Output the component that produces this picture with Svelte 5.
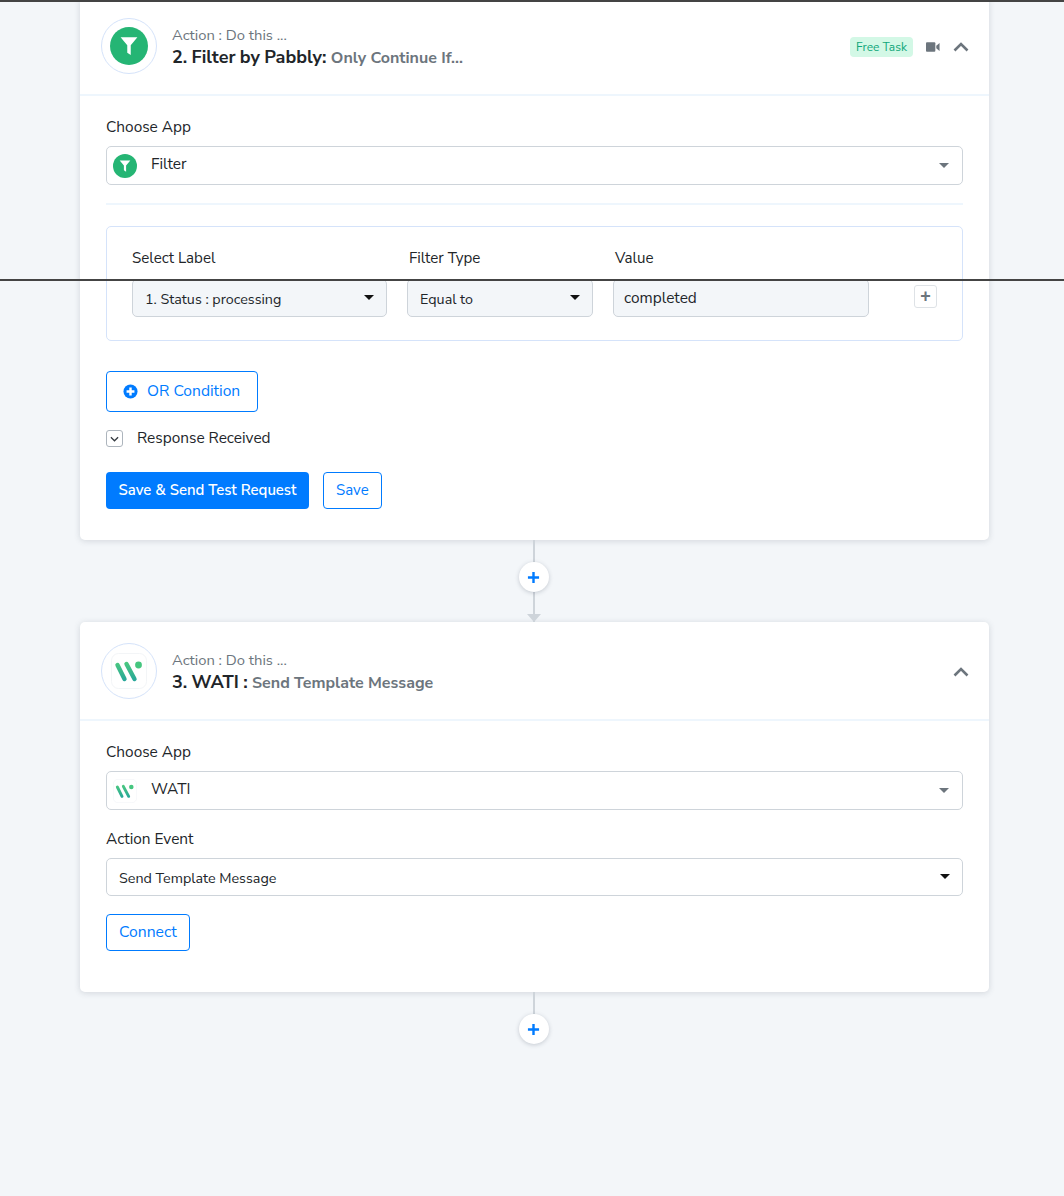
<script>
  const filterIcon = "M6.7 6.5h10.6l-4.2 5v6.2l-2.2-1.4v-4.8z";
</script>

<div class="page">
  <div class="rule top"></div>
  <div class="rule middle"></div>

  <section class="card">
    <header class="card-head">
      <div class="logo-ring">
        <svg class="logo" viewBox="0 0 24 24"><circle cx="12" cy="12" r="12" fill="#25b574" /><path d={filterIcon} fill="#fff" /></svg>
      </div>
      <div class="titles">
        <div class="kicker">Action : Do this ...</div>
        <div class="title">2. Filter by Pabbly: <span>Only Continue If...</span></div>
      </div>
      <span class="badge">Free Task</span>
      <svg class="video" viewBox="0 0 15 10"><rect x="0" y="0" width="10" height="10" rx="1" fill="#6c757d" /><path d="M11 3.6 14.5.8v8.4L11 6.4z" fill="#6c757d" /></svg>
      <svg class="chevron" viewBox="0 0 16 10"><path d="M1.5 8.5 8 2l6.5 6.5" fill="none" stroke="#6c757d" stroke-width="2.6" /></svg>
    </header>

    <div class="card-body">
      <div class="label">Choose App</div>
      <div class="app-select">
        <svg class="app-logo" viewBox="0 0 24 24"><circle cx="12" cy="12" r="12" fill="#25b574" /><path d={filterIcon} fill="#fff" /></svg>
        <span>Filter</span>
        <i class="caret grey"></i>
      </div>
      <hr />

      <div class="filter-box">
        <div class="filter-grid">
          <div class="label">Select Label</div>
          <div class="label inset">Filter Type</div>
          <div class="label inset">Value</div>
          <div></div>
          <div class="field small">1. Status : processing<i class="caret"></i></div>
          <div class="field small">Equal to<i class="caret"></i></div>
          <div class="field value">completed</div>
          <button class="plus">+</button>
        </div>
      </div>

      <button class="outline or">
        <svg viewBox="0 0 16 16"><circle cx="8" cy="8" r="7.5" fill="#007bff" /><path d="M8 3.8v8.4M3.8 8h8.4" stroke="#fff" stroke-width="2.6" /></svg>
        OR Condition
      </button>

      <div class="response">
        <span class="toggle"><svg viewBox="0 0 10 6"><path d="M1 1l4 4 4-4" fill="none" stroke="#343a40" stroke-width="1.4" /></svg></span>
        <span class="response-text">Response Received</span>
      </div>

      <div class="actions">
        <button class="solid">Save &amp; Send Test Request</button>
        <button class="outline small-btn">Save</button>
      </div>
    </div>
  </section>

  <div class="connector">
    <div class="add"><svg viewBox="0 0 14 14"><path d="M7 1v12M1 7h12" stroke="#007bff" stroke-width="2.6" /></svg></div>
    <div class="arrow"></div>
  </div>

  <section class="card">
    <header class="card-head">
      <div class="logo-ring">
        <svg class="logo wati" viewBox="0 0 36 36">
          <rect x=".5" y=".5" width="35" height="35" rx="7" fill="#fff" stroke="#f3f5f7" />
          <defs><linearGradient id="wg" gradientUnits="userSpaceOnUse" x1="0" y1="9" x2="0" y2="28"><stop offset="0" stop-color="#4cc97f" /><stop offset="1" stop-color="#26a69a" /></linearGradient></defs>
          <path d="M6.5 12l7 14M15.5 11l8 15" stroke="url(#wg)" stroke-width="4.4" stroke-linecap="round" fill="none" />
          <circle cx="27.5" cy="12" r="3.4" fill="#45c67f" />
        </svg>
      </div>
      <div class="titles">
        <div class="kicker">Action : Do this ...</div>
        <div class="title">3. WATI : <span>Send Template Message</span></div>
      </div>
      <svg class="chevron" viewBox="0 0 16 10"><path d="M1.5 8.5 8 2l6.5 6.5" fill="none" stroke="#6c757d" stroke-width="2.6" /></svg>
    </header>

    <div class="card-body second">
      <div class="label">Choose App</div>
      <div class="app-select">
        <svg class="app-logo" viewBox="0 0 36 36">
          <rect x=".5" y=".5" width="35" height="35" rx="7" fill="#fff" stroke="#f3f5f7" />
          <path d="M6.5 12l7 14M15.5 11l8 15" stroke="url(#wg)" stroke-width="4.4" stroke-linecap="round" fill="none" />
          <circle cx="27.5" cy="12" r="3.4" fill="#45c67f" />
        </svg>
        <span>WATI</span>
        <i class="caret grey"></i>
      </div>
      <div class="label event">Action Event</div>
      <div class="field wide small">Send Template Message<i class="caret"></i></div>
      <button class="outline small-btn connect">Connect</button>
    </div>
  </section>

  <div class="connector last">
    <div class="add"><svg viewBox="0 0 14 14"><path d="M7 1v12M1 7h12" stroke="#007bff" stroke-width="2.6" /></svg></div>
  </div>
</div>

<style>
  :global(body) {
    margin: 0;
    background: #f3f6f9;
  }

  .page {
    position: relative;
    height: 1196px;
    overflow: hidden;
    padding: 0 75px 0 80px;
    box-sizing: border-box;
    font-family: "Nunito Sans", Lato, "Open Sans", sans-serif;
    color: #212529;
    font-size: 15.4px;
  }

  .rule {
    position: absolute;
    left: 0;
    right: 0;
    height: 2px;
    background: #444;
    z-index: 5;
  }
  .rule.top {
    top: 0;
  }
  .rule.middle {
    top: 279px;
  }

  .card {
    background: #fff;
    border-radius: 5px;
    box-shadow: 0 1px 6px rgba(60, 70, 90, 0.18);
  }
  .card:first-of-type {
    margin-top: -3px;
  }

  .card-head {
    height: 96px;
    padding: 1px 20px 0 21px;
    border-bottom: 2px solid #eef6fd;
    display: flex;
    align-items: center;
  }

  .logo-ring {
    width: 56px;
    height: 56px;
    box-sizing: border-box;
    border: 1px solid #d5e3fa;
    border-radius: 50%;
    display: flex;
    align-items: center;
    justify-content: center;
    margin-right: 15px;
  }
  .logo {
    width: 38px;
    height: 38px;
  }
  .logo.wati {
    width: 36px;
    height: 36px;
  }

  .titles {
    flex: 1;
    padding-top: 6px;
  }
  .kicker {
    color: #6c757d;
    font-size: 14.8px;
    line-height: 18px;
    margin: -1px 0 1px;
  }
  .title {
    font-size: 18px;
    font-weight: 700;
    line-height: 25px;
    color: #212529;
    word-spacing: -0.5px;
  }
  .title span {
    font-size: 16px;
    color: #6c757d;
    word-spacing: 0;
  }

  .badge {
    background: #d3f8e6;
    color: #0fa77a;
    font-size: 12px;
    line-height: 20px;
    padding: 0 6px;
    border-radius: 4px;
    margin-right: 13px;
    margin-top: 2px;
    margin-left: 1px;
  }
  .video {
    width: 14px;
    height: 10px;
    margin-right: 13px;
    margin-top: 2px;
  }
  .chevron {
    width: 16px;
    height: 10px;
    margin-top: 2px;
  }

  .card-body {
    padding: 21px 26px 31px;
  }
  .card-body.second {
    padding-bottom: 41px;
  }

  .label {
    line-height: 20px;
    margin-bottom: 9px;
  }
  .label.event {
    margin-top: 19px;
  }

  .app-select {
    height: 39px;
    box-sizing: border-box;
    border: 1px solid #ced4da;
    border-radius: 5px;
    display: flex;
    align-items: center;
    padding: 0 13px 0 6px;
  }
  .app-logo {
    width: 24px;
    height: 24px;
    margin-right: 14px;
  }
  .app-select span {
    flex: 1;
    margin-top: -5px;
  }

  .caret {
    width: 0;
    height: 0;
    border: 5.5px solid transparent;
    border-top: 5px solid #111;
    border-bottom-width: 0;
    margin-left: auto;
    margin-top: -5px;
  }
  .caret.grey {
    border-width: 5px 5px 0;
    border-top-color: #6c757d;
    margin-top: 0;
  }

  hr {
    border: 0;
    border-top: 2px solid #eef6fd;
    margin: 18px 0 21px;
  }

  .filter-box {
    height: 115px;
    box-sizing: border-box;
    border: 1px solid #d5e3fa;
    border-radius: 5px;
    padding: 21px 25px 0;
  }
  .filter-grid {
    display: grid;
    grid-template-columns: 255px 186px 256px 23px;
    column-gap: 20px;
    align-items: start;
  }
  .filter-grid .label {
    margin-bottom: 11px;
    font-size: 15.1px;
  }
  .filter-grid .inset {
    padding-left: 2px;
  }
  .filter-grid .plus {
    margin-left: 25px;
    margin-top: 6px;
  }

  .field {
    height: 38px;
    box-sizing: border-box;
    background: #f3f6f9;
    border: 1px solid #ced4da;
    border-radius: 5px;
    display: flex;
    align-items: center;
    padding: 3px 12px 0;
  }
  .field.small {
    font-size: 14.3px;
  }
  .field.value {
    padding: 0 10px 2px;
    font-size: 15.4px;
  }
  .field.wide {
    background: #fff;
  }

  .plus {
    width: 23px;
    height: 23px;
    padding: 0 0 2px;
    background: #fff;
    border: 1px solid #dee2e6;
    border-radius: 3px;
    color: #6c757d;
    font: 700 18px/20px "Liberation Sans", sans-serif;
  }

  button {
    font-family: inherit;
    cursor: pointer;
  }
  .outline {
    background: #fff;
    border: 1px solid #007bff;
    border-radius: 4px;
    color: #007bff;
    font-size: 15.6px;
  }
  .or {
    display: flex;
    align-items: center;
    gap: 9px;
    height: 41px;
    width: 152px;
    padding: 0 0 2px 16px;
    margin-top: 30px;
  }
  .or svg {
    width: 15px;
    height: 15px;
    margin-top: 2px;
  }

  .response {
    display: flex;
    align-items: center;
    gap: 14px;
    margin-top: 18px;
    height: 17px;
  }
  .response-text {
    margin-top: -2px;
  }
  .toggle {
    width: 17px;
    height: 17px;
    box-sizing: border-box;
    border: 1px solid #adb5bd;
    border-radius: 3px;
    display: flex;
    align-items: center;
    justify-content: center;
  }
  .toggle svg {
    width: 9px;
    height: 6px;
  }

  .actions {
    display: flex;
    gap: 14px;
    margin-top: 25px;
  }
  .solid {
    height: 37px;
    width: 203px;
    padding: 0 0 2px;
    background: #007bff;
    border: 0;
    border-radius: 4px;
    color: #fff;
    font-size: 14.9px;
    font-weight: 600;
  }
  .small-btn {
    height: 37px;
    padding: 0 12px 2px;
    font-size: 15px;
  }
  .connect {
    margin-top: 18px;
    display: block;
    font-size: 15.7px;
  }

  .connector {
    position: relative;
    height: 82px;
    width: 2px;
    margin: 0 auto;
    left: -1px;
    background: #ced4da;
  }
  .connector.last {
    height: 22px;
  }
  .add {
    position: absolute;
    left: -14px;
    top: 22px;
    width: 30px;
    height: 30px;
    border-radius: 50%;
    background: #fff;
    box-shadow: 0 1px 4px rgba(60, 70, 90, 0.25);
    display: flex;
    align-items: center;
    justify-content: center;
  }
  .add svg {
    width: 13px;
    height: 13px;
  }
  .arrow {
    position: absolute;
    left: -6px;
    bottom: 0;
    width: 0;
    height: 0;
    border: 7px solid transparent;
    border-top: 8px solid #ced4da;
    border-bottom-width: 0;
  }
</style>
